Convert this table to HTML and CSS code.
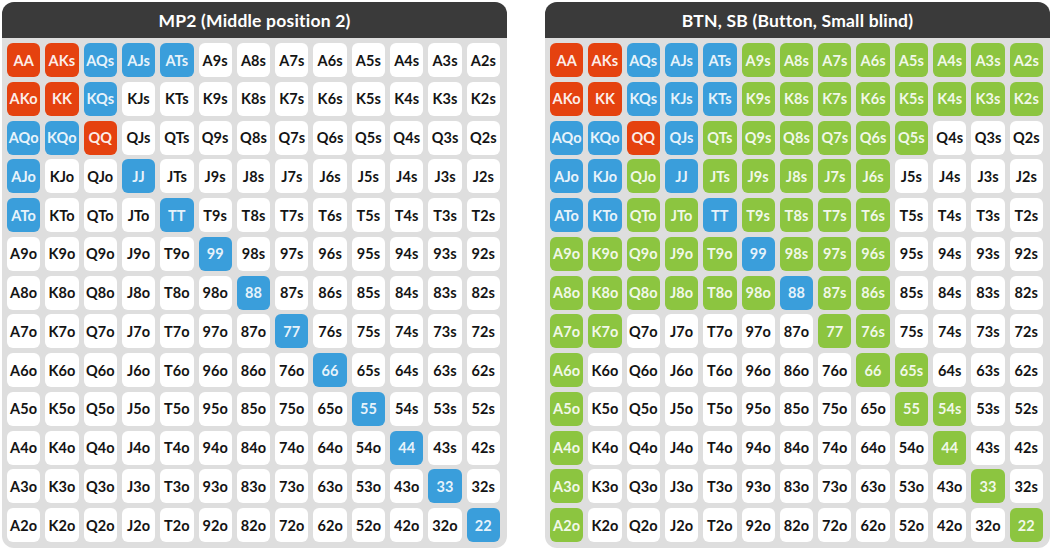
FILE: index.html
```html
<!DOCTYPE html>
<html>
<head>
<meta charset="utf-8">
<link rel="stylesheet" href="styles.css">
</head>
<body>
<div class="charts">
  <section class="panel">
    <header class="head">MP2 (Middle position 2)</header>
    <div class="grid">
      <div class="c r">AA</div><div class="c r">AKs</div><div class="c b">AQs</div><div class="c b">AJs</div><div class="c b">ATs</div><div class="c">A9s</div><div class="c">A8s</div><div class="c">A7s</div><div class="c">A6s</div><div class="c">A5s</div><div class="c">A4s</div><div class="c">A3s</div><div class="c">A2s</div>
      <div class="c r">AKo</div><div class="c r">KK</div><div class="c b">KQs</div><div class="c">KJs</div><div class="c">KTs</div><div class="c">K9s</div><div class="c">K8s</div><div class="c">K7s</div><div class="c">K6s</div><div class="c">K5s</div><div class="c">K4s</div><div class="c">K3s</div><div class="c">K2s</div>
      <div class="c b">AQo</div><div class="c b">KQo</div><div class="c r">QQ</div><div class="c">QJs</div><div class="c">QTs</div><div class="c">Q9s</div><div class="c">Q8s</div><div class="c">Q7s</div><div class="c">Q6s</div><div class="c">Q5s</div><div class="c">Q4s</div><div class="c">Q3s</div><div class="c">Q2s</div>
      <div class="c b">AJo</div><div class="c">KJo</div><div class="c">QJo</div><div class="c b">JJ</div><div class="c">JTs</div><div class="c">J9s</div><div class="c">J8s</div><div class="c">J7s</div><div class="c">J6s</div><div class="c">J5s</div><div class="c">J4s</div><div class="c">J3s</div><div class="c">J2s</div>
      <div class="c b">ATo</div><div class="c">KTo</div><div class="c">QTo</div><div class="c">JTo</div><div class="c b">TT</div><div class="c">T9s</div><div class="c">T8s</div><div class="c">T7s</div><div class="c">T6s</div><div class="c">T5s</div><div class="c">T4s</div><div class="c">T3s</div><div class="c">T2s</div>
      <div class="c">A9o</div><div class="c">K9o</div><div class="c">Q9o</div><div class="c">J9o</div><div class="c">T9o</div><div class="c b">99</div><div class="c">98s</div><div class="c">97s</div><div class="c">96s</div><div class="c">95s</div><div class="c">94s</div><div class="c">93s</div><div class="c">92s</div>
      <div class="c">A8o</div><div class="c">K8o</div><div class="c">Q8o</div><div class="c">J8o</div><div class="c">T8o</div><div class="c">98o</div><div class="c b">88</div><div class="c">87s</div><div class="c">86s</div><div class="c">85s</div><div class="c">84s</div><div class="c">83s</div><div class="c">82s</div>
      <div class="c">A7o</div><div class="c">K7o</div><div class="c">Q7o</div><div class="c">J7o</div><div class="c">T7o</div><div class="c">97o</div><div class="c">87o</div><div class="c b">77</div><div class="c">76s</div><div class="c">75s</div><div class="c">74s</div><div class="c">73s</div><div class="c">72s</div>
      <div class="c">A6o</div><div class="c">K6o</div><div class="c">Q6o</div><div class="c">J6o</div><div class="c">T6o</div><div class="c">96o</div><div class="c">86o</div><div class="c">76o</div><div class="c b">66</div><div class="c">65s</div><div class="c">64s</div><div class="c">63s</div><div class="c">62s</div>
      <div class="c">A5o</div><div class="c">K5o</div><div class="c">Q5o</div><div class="c">J5o</div><div class="c">T5o</div><div class="c">95o</div><div class="c">85o</div><div class="c">75o</div><div class="c">65o</div><div class="c b">55</div><div class="c">54s</div><div class="c">53s</div><div class="c">52s</div>
      <div class="c">A4o</div><div class="c">K4o</div><div class="c">Q4o</div><div class="c">J4o</div><div class="c">T4o</div><div class="c">94o</div><div class="c">84o</div><div class="c">74o</div><div class="c">64o</div><div class="c">54o</div><div class="c b">44</div><div class="c">43s</div><div class="c">42s</div>
      <div class="c">A3o</div><div class="c">K3o</div><div class="c">Q3o</div><div class="c">J3o</div><div class="c">T3o</div><div class="c">93o</div><div class="c">83o</div><div class="c">73o</div><div class="c">63o</div><div class="c">53o</div><div class="c">43o</div><div class="c b">33</div><div class="c">32s</div>
      <div class="c">A2o</div><div class="c">K2o</div><div class="c">Q2o</div><div class="c">J2o</div><div class="c">T2o</div><div class="c">92o</div><div class="c">82o</div><div class="c">72o</div><div class="c">62o</div><div class="c">52o</div><div class="c">42o</div><div class="c">32o</div><div class="c b">22</div>
    </div>
  </section>
  <section class="panel">
    <header class="head">BTN, SB (Button, Small blind)</header>
    <div class="grid">
      <div class="c r">AA</div><div class="c r">AKs</div><div class="c b">AQs</div><div class="c b">AJs</div><div class="c b">ATs</div><div class="c g">A9s</div><div class="c g">A8s</div><div class="c g">A7s</div><div class="c g">A6s</div><div class="c g">A5s</div><div class="c g">A4s</div><div class="c g">A3s</div><div class="c g">A2s</div>
      <div class="c r">AKo</div><div class="c r">KK</div><div class="c b">KQs</div><div class="c b">KJs</div><div class="c b">KTs</div><div class="c g">K9s</div><div class="c g">K8s</div><div class="c g">K7s</div><div class="c g">K6s</div><div class="c g">K5s</div><div class="c g">K4s</div><div class="c g">K3s</div><div class="c g">K2s</div>
      <div class="c b">AQo</div><div class="c b">KQo</div><div class="c r">QQ</div><div class="c b">QJs</div><div class="c g">QTs</div><div class="c g">Q9s</div><div class="c g">Q8s</div><div class="c g">Q7s</div><div class="c g">Q6s</div><div class="c g">Q5s</div><div class="c">Q4s</div><div class="c">Q3s</div><div class="c">Q2s</div>
      <div class="c b">AJo</div><div class="c b">KJo</div><div class="c g">QJo</div><div class="c b">JJ</div><div class="c g">JTs</div><div class="c g">J9s</div><div class="c g">J8s</div><div class="c g">J7s</div><div class="c g">J6s</div><div class="c">J5s</div><div class="c">J4s</div><div class="c">J3s</div><div class="c">J2s</div>
      <div class="c b">ATo</div><div class="c b">KTo</div><div class="c g">QTo</div><div class="c g">JTo</div><div class="c b">TT</div><div class="c g">T9s</div><div class="c g">T8s</div><div class="c g">T7s</div><div class="c g">T6s</div><div class="c">T5s</div><div class="c">T4s</div><div class="c">T3s</div><div class="c">T2s</div>
      <div class="c g">A9o</div><div class="c g">K9o</div><div class="c g">Q9o</div><div class="c g">J9o</div><div class="c g">T9o</div><div class="c b">99</div><div class="c g">98s</div><div class="c g">97s</div><div class="c g">96s</div><div class="c">95s</div><div class="c">94s</div><div class="c">93s</div><div class="c">92s</div>
      <div class="c g">A8o</div><div class="c g">K8o</div><div class="c g">Q8o</div><div class="c g">J8o</div><div class="c g">T8o</div><div class="c g">98o</div><div class="c b">88</div><div class="c g">87s</div><div class="c g">86s</div><div class="c">85s</div><div class="c">84s</div><div class="c">83s</div><div class="c">82s</div>
      <div class="c g">A7o</div><div class="c g">K7o</div><div class="c">Q7o</div><div class="c">J7o</div><div class="c">T7o</div><div class="c">97o</div><div class="c">87o</div><div class="c g">77</div><div class="c g">76s</div><div class="c">75s</div><div class="c">74s</div><div class="c">73s</div><div class="c">72s</div>
      <div class="c g">A6o</div><div class="c">K6o</div><div class="c">Q6o</div><div class="c">J6o</div><div class="c">T6o</div><div class="c">96o</div><div class="c">86o</div><div class="c">76o</div><div class="c g">66</div><div class="c g">65s</div><div class="c">64s</div><div class="c">63s</div><div class="c">62s</div>
      <div class="c g">A5o</div><div class="c">K5o</div><div class="c">Q5o</div><div class="c">J5o</div><div class="c">T5o</div><div class="c">95o</div><div class="c">85o</div><div class="c">75o</div><div class="c">65o</div><div class="c g">55</div><div class="c g">54s</div><div class="c">53s</div><div class="c">52s</div>
      <div class="c g">A4o</div><div class="c">K4o</div><div class="c">Q4o</div><div class="c">J4o</div><div class="c">T4o</div><div class="c">94o</div><div class="c">84o</div><div class="c">74o</div><div class="c">64o</div><div class="c">54o</div><div class="c g">44</div><div class="c">43s</div><div class="c">42s</div>
      <div class="c g">A3o</div><div class="c">K3o</div><div class="c">Q3o</div><div class="c">J3o</div><div class="c">T3o</div><div class="c">93o</div><div class="c">83o</div><div class="c">73o</div><div class="c">63o</div><div class="c">53o</div><div class="c">43o</div><div class="c g">33</div><div class="c">32s</div>
      <div class="c g">A2o</div><div class="c">K2o</div><div class="c">Q2o</div><div class="c">J2o</div><div class="c">T2o</div><div class="c">92o</div><div class="c">82o</div><div class="c">72o</div><div class="c">62o</div><div class="c">52o</div><div class="c">42o</div><div class="c">32o</div><div class="c g">22</div>
    </div>
  </section>
</div>
</body>
</html>
```

FILE: styles.css
```css
* { box-sizing: border-box; }
html, body { margin: 0; padding: 0; background: #ffffff; }
body {
  width: 1050px;
  height: 550px;
  overflow: hidden;
  font-family: Lato, "Noto Sans", "Liberation Sans", sans-serif;
}
.charts {
  display: flex;
  gap: 38px;
  padding: 2px 0 0 2px;
}
.panel {
  width: 505px;
  flex: none;
  height: 546px;
  border-radius: 12px;
  overflow: hidden;
  background: #dedede;
  display: flex;
  flex-direction: column;
}
.head {
  height: 36px;
  background: #3a3a3a;
  color: #ffffff;
  font-weight: 700;
  font-size: 17.5px;
  display: flex;
  align-items: center;
  justify-content: center;
  letter-spacing: 0.2px;
}
.grid {
  flex: 1;
  display: grid;
  grid-template-columns: repeat(13, 1fr);
  grid-template-rows: repeat(13, 34px);
  column-gap: 5px;
  row-gap: 4.75px;
  padding: 5px 7px 6px 5px;
}
.c {
  background: #ffffff;
  border-radius: 6px;
  display: flex;
  align-items: center;
  justify-content: center;
  font-size: 14.5px;
  font-weight: 700;
  color: #141414;
  letter-spacing: 0.1px;
}
.c.r { background: #e5420f; color: rgba(255,255,255,0.92); }
.c.b { background: #3a9edb; color: rgba(255,255,255,0.9); }
.c.g { background: #8cc540; color: rgba(255,255,255,0.9); }
```
